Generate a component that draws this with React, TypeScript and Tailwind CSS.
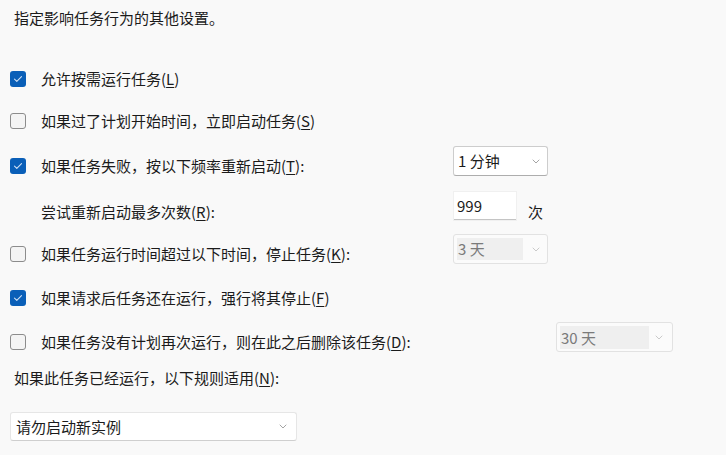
import React from "react";

const FONT = { fontFamily: '"Noto Sans CJK SC", "Noto Sans", sans-serif' };

function Acc({ k }: { k: string }) {
  return (
    <>
      (<span className="underline underline-offset-2">{k}</span>)
    </>
  );
}

function Check({ checked }: { checked: boolean }) {
  if (checked) {
    return (
      <div className="w-[16px] h-[16px] rounded-[3px] bg-[#0a5fb8] flex items-center justify-center shrink-0">
        <svg width="10" height="8" viewBox="0 0 10 8" fill="none">
          <path d="M1.5 4.2 L3.8 6.3 L8.5 1.6" stroke="#cfe0f5" strokeWidth="1.1" strokeLinecap="round" strokeLinejoin="round" />
        </svg>
      </div>
    );
  }
  return <div className="w-[16px] h-[16px] rounded-[3px] border border-[#8c8c8c] bg-[#f4f4f4] shrink-0" />;
}

function Chevron({ color = "#9a9a9a" }: { color?: string }) {
  return (
    <svg width="8" height="5" viewBox="0 0 8 5" fill="none">
      <path d="M1 1 L4 4 L7 1" stroke={color} strokeWidth="0.9" strokeLinecap="round" strokeLinejoin="round" />
    </svg>
  );
}

function CheckLabel({ checked, children }: { checked: boolean; children: React.ReactNode }) {
  return (
    <div className="flex items-center h-[20px]">
      <Check checked={checked} />
      <span className="ml-[15px] leading-[20px] whitespace-nowrap">{children}</span>
    </div>
  );
}

export default function App() {
  return (
    <div
      className="w-[726px] h-[455px] bg-[#f9f9f9] text-[#1b1b1b] text-[15px] overflow-hidden pl-[10px] pt-[8px]"
      style={FONT}
    >
      <div className="h-[20px] leading-[20px] pl-[4px] whitespace-nowrap">指定影响任务行为的其他设置。</div>

      <div className="mt-[41px]">
        <CheckLabel checked>
          允许按需运行任务<Acc k="L" />
        </CheckLabel>
      </div>

      <div className="mt-[22px]">
        <CheckLabel checked={false}>
          如果过了计划开始时间，立即启动任务<Acc k="S" />
        </CheckLabel>
      </div>

      {/* retry on failure */}
      <div className="mt-[15px] h-[30px] flex items-start">
        <div className="w-[443px] mt-[10px]">
          <CheckLabel checked>
            如果任务失败，按以下频率重新启动<Acc k="T" />:
          </CheckLabel>
        </div>
        <div className="w-[95px] h-[30px] bg-white border border-[#cdcdcd] border-b-[#adadad] rounded-[3px] flex items-center justify-between pl-[4px] pr-[7px]">
          <span className="leading-[20px]">1 分钟</span>
          <Chevron />
        </div>
      </div>

      {/* retry count */}
      <div className="mt-[16px] h-[28px] flex items-start">
        <div className="w-[444px] mt-[10px] pl-[31px] h-[20px] leading-[20px] whitespace-nowrap">
          尝试重新启动最多次数<Acc k="R" />:
        </div>
        <div className="w-[62px] h-[28px] bg-white border-b border-[#c4c4c4] shadow-[0_0_0_1px_#f0f0f0] flex items-center pl-[3px]">
          <span className="leading-[20px]">999</span>
        </div>
        <div className="ml-[12px] mt-[10px] h-[20px] leading-[20px]">次</div>
      </div>

      {/* stop after */}
      <div className="mt-[14px] h-[30px] flex items-start">
        <div className="w-[443px] mt-[10px]">
          <CheckLabel checked={false}>
            如果任务运行时间超过以下时间，停止任务<Acc k="K" />:
          </CheckLabel>
        </div>
        <div className="w-[95px] h-[30px] bg-[#fbfbfb] border border-[#e2e2e2] rounded-[3px] flex items-center justify-between pl-[3px] pr-[7px]">
          <span className="w-[66px] h-[22px] bg-[#efefef] text-[#7a7a7a] leading-[22px] pl-[1px]">3 天</span>
          <Chevron color="#c4c4c4" />
        </div>
      </div>

      <div className="mt-[24px]">
        <CheckLabel checked>
          如果请求后任务还在运行，强行将其停止<Acc k="F" />
        </CheckLabel>
      </div>

      {/* delete after */}
      <div className="mt-[14px] h-[30px] flex items-start">
        <div className="w-[546px] mt-[10px]">
          <CheckLabel checked={false}>
            如果任务没有计划再次运行，则在此之后删除该任务<Acc k="D" />:
          </CheckLabel>
        </div>
        <div className="w-[117px] h-[30px] bg-[#fbfbfb] border border-[#e2e2e2] rounded-[3px] flex items-center justify-between pl-[3px] pr-[9px]">
          <span className="w-[89px] h-[23px] bg-[#efefef] text-[#7a7a7a] leading-[23px] pl-[1px]">30 天</span>
          <Chevron color="#c4c4c4" />
        </div>
      </div>

      <div className="mt-[16px] h-[20px] leading-[20px] pl-[4px] whitespace-nowrap">
        如果此任务已经运行，以下规则适用<Acc k="N" />:
      </div>

      <div className="mt-[24px] w-[287px] h-[29px] bg-white border border-[#e6e6e6] border-b-[#cfcfcf] rounded-[3px] flex items-center justify-between pl-[5px] pr-[9px]">
        <span className="leading-[20px]">请勿启动新实例</span>
        <Chevron />
      </div>
    </div>
  );
}
